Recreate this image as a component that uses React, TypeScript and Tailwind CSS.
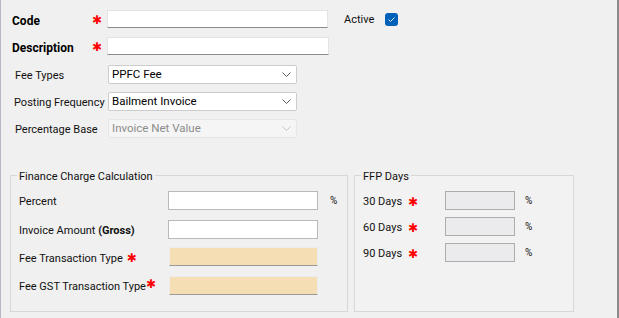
import React from "react";

const Star = ({ className = "" }: { className?: string }) => (
  <span className={`text-[#ff0000] text-[12px] leading-none font-bold ${className}`} style={{ fontFamily: "'DejaVu Sans', sans-serif" }}>
    ✱
  </span>
);

const Chevron = ({ disabled }: { disabled?: boolean }) => (
  <svg width="9" height="5" viewBox="0 0 9 5" className="shrink-0">
    <path d="M0.5 0.5 L4.5 4.5 L8.5 0.5" fill="none" stroke={disabled ? "#c4c4c4" : "#5a5a5a"} strokeWidth="1" />
  </svg>
);

function Select({ value, disabled }: { value: string; disabled?: boolean }) {
  return (
    <div
      className={`w-[189px] h-[19px] flex items-center justify-between pl-[3px] pr-[5px] rounded-[2px] border ${
        disabled ? "bg-[#f5f5f5] border-[#e6e6e6] text-[#8c8c8c]" : "bg-white border-[#cccccc] text-black"
      }`}
    >
      <span className="text-[11.5px] pt-[1px]">{value}</span>
      <Chevron disabled={disabled} />
    </div>
  );
}

export default function App() {
  return (
    <div
      className="w-[619px] h-[318px] bg-[#f0f0f0] overflow-hidden border-l border-l-[#b8b8c8] border-r-2 border-r-[#8a8a8a] text-[11px] text-[#111] leading-none whitespace-nowrap"
      style={{ fontFamily: "Roboto, 'Liberation Sans', sans-serif" }}
    >
      {/* top fields */}
      <div className="pt-[10px] pl-[11px]">
        <div className="flex items-center h-[18px]">
          <span className="w-[80px] font-bold text-[12px] text-black pt-[3px]">Code</span>
          <Star className="w-[15px] pt-[1px]" />
          <div className="w-[221px] h-[18px] bg-white border border-[#e3e3e3] border-b-[#8a8a8a]" />
          <span className="ml-[16px] pt-[1px]">Active</span>
          <div className="ml-[11px] w-[13px] h-[13px] rounded-[3px] bg-[#005fb8] flex items-center justify-center">
            <svg width="9" height="7" viewBox="0 0 9 7">
              <path d="M1.5 3.5 L3.5 5.5 L7.5 1.5" fill="none" stroke="#dbe8f5" strokeWidth="1" />
            </svg>
          </div>
        </div>
        <div className="flex items-center h-[18px] mt-[9px]">
          <span className="w-[80px] font-bold text-[12px] text-black pt-[3px]">Description</span>
          <Star className="w-[15px] pt-[1px]" />
          <div className="w-[222px] h-[18px] bg-white border border-[#e3e3e3] border-b-[#8a8a8a]" />
        </div>
        <div className="flex items-center h-[19px] mt-[10px]">
          <span className="w-[96px] pl-[3px] pt-[1px]">Fee Types</span>
          <Select value="PPFC Fee" />
        </div>
        <div className="flex items-center h-[19px] mt-[8px]">
          <span className="w-[96px] pl-[2px] pt-[1px]">Posting Frequency</span>
          <Select value="Bailment Invoice" />
        </div>
        <div className="flex items-center h-[19px] mt-[8px]">
          <span className="w-[96px] pl-[3px] pt-[1px]">Percentage Base</span>
          <Select value="Invoice Net Value" disabled />
        </div>
      </div>

      {/* group boxes */}
      <div className="flex mt-[37px] pl-[9px] gap-[6px]">
        <div className="relative w-[338px] h-[137px] border border-[#d7d7d7] pl-[8px] pt-[15px]">
          <span className="absolute left-[6px] top-[-5px] px-[2px] bg-[#f0f0f0]">Finance Charge Calculation</span>
          <div className="flex items-center h-[19px]">
            <span className="w-[149px] pt-[2px]">Percent</span>
            <div className="w-[150px] h-[19px] bg-white border border-[#b9b9b9]" />
            <span className="ml-[12px] text-[10px]">%</span>
          </div>
          <div className="flex items-center h-[19px] mt-[10px]">
            <span className="w-[149px] pt-[1px]">
              Invoice Amount <b>(Gross)</b>
            </span>
            <div className="w-[150px] h-[19px] bg-white border border-[#b9b9b9]" />
          </div>
          <div className="flex items-center h-[19px] mt-[8px]">
            <span className="w-[150px] flex items-center pt-[4px]">
              Fee Transaction Type <Star className="ml-[4px] relative top-[-1px]" />
            </span>
            <div className="w-[149px] h-[19px] bg-[#f5deb3] border border-[#ececec] border-b-[#9a9a9a]" />
          </div>
          <div className="flex items-center h-[19px] mt-[10px]">
            <span className="w-[150px] flex items-center pt-[2px]">
              Fee GST Transaction Type<Star className="relative top-[-3px]" />
            </span>
            <div className="w-[149px] h-[19px] bg-[#f5deb3] border border-[#ececec] border-b-[#9a9a9a]" />
          </div>
        </div>

        <div className="relative w-[220px] h-[137px] border border-[#d7d7d7] bg-[#f2f2f2] pl-[8px] pt-[15px]">
          <span className="absolute left-[6px] top-[-5px] px-[2px] bg-[#f0f0f0]">FFP Days</span>
          {["30 Days", "60 Days", "90 Days"].map((d, i) => (
            <div key={d} className={`flex items-center h-[19px] ${i > 0 ? "mt-[7px]" : ""}`}>
              <span className="w-[82px] flex items-center pt-[2px]">
                {d} <Star className="ml-[6px]" />
              </span>
              <div className="w-[70px] h-[19px] bg-[#ebebee] border border-[#adadad]" />
              <span className="ml-[10px] text-[10px]">%</span>
            </div>
          ))}
        </div>
      </div>
    </div>
  );
}
